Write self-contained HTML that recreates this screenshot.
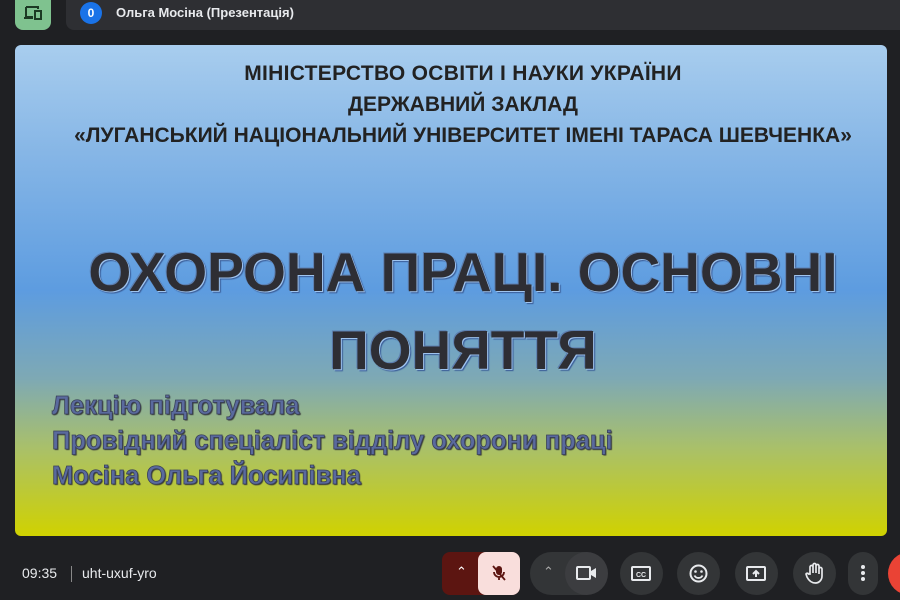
<!DOCTYPE html>
<html><head><meta charset="utf-8"><style>
*{margin:0;padding:0;box-sizing:border-box}
body{width:900px;height:600px;background:#1f2023;font-family:"Liberation Sans",sans-serif;position:relative;overflow:hidden}
.abs{position:absolute}
.slide{left:15px;top:45px;width:872px;height:491px;border-radius:6px;
background:linear-gradient(180deg,#a8cdee 0%,#86b6e6 22%,#5d9ce0 50%,#7ea9b4 68%,#a9c06a 82%,#d0d200 100%)}
.hdr{left:27px;width:872px;text-align:center;font-weight:bold;font-size:21px;color:#222;white-space:nowrap}
.big{left:27px;width:872px;text-align:center;font-weight:bold;font-size:55px;color:#2e2e34;white-space:nowrap;
text-shadow:1px 1px 0 #9ec3ee,-1px -1px 0 #5d7fb0,2px 2px 1px #3a5d98}
.sub{left:52px;font-weight:bold;font-size:25.5px;color:#5a6a9e;-webkit-text-stroke:0.8px #39405a;text-shadow:1px 1px 1px #333;white-space:nowrap}
.btn{background:#333537;border-radius:22px;height:43px;top:552px}
</style></head><body>
<div class="abs" style="left:15px;top:0;width:36px;height:30px;background:#7fc28f;border-radius:0 0 8px 8px"></div>
<svg class="abs" style="left:23px;top:5px" width="20" height="16" viewBox="0 0 20 16"><path d="M3 2h12v2M3 2v10h7M1 13h9" stroke="#1c3a23" stroke-width="2" fill="none"/><rect x="12" y="6" width="6" height="8" stroke="#1c3a23" stroke-width="2" fill="none"/></svg>
<div class="abs" style="left:66px;top:0;width:834px;height:30px;background:#2e2f33;border-radius:0 0 0 8px"></div>
<div class="abs" style="left:80px;top:2px;width:22px;height:22px;border-radius:50%;background:#1a73e8;color:#fff;font-size:12px;font-weight:bold;text-align:center;line-height:22px">0</div>
<div class="abs" style="left:116px;top:5px;color:#e8eaed;font-size:13px;font-weight:bold">Ольга Мосіна (Презентація)</div>

<div class="abs slide"></div>
<div class="abs hdr" style="top:62px;letter-spacing:0.3px">МІНІСТЕРСТВО ОСВІТИ І НАУКИ УКРАЇНИ</div>
<div class="abs hdr" style="top:93px">ДЕРЖАВНИЙ ЗАКЛАД</div>
<div class="abs hdr" style="top:124px">«ЛУГАНСЬКИЙ НАЦІОНАЛЬНИЙ УНІВЕРСИТЕТ ІМЕНІ ТАРАСА ШЕВЧЕНКА»</div>
<div class="abs big" style="top:240px">ОХОРОНА ПРАЦІ. ОСНОВНІ</div>
<div class="abs big" style="top:318px">ПОНЯТТЯ</div>
<div class="abs sub" style="top:392px">Лекцію підготувала</div>
<div class="abs sub" style="top:427px">Провідний спеціаліст відділу охорони праці</div>
<div class="abs sub" style="top:462px">Мосіна Ольга Йосипівна</div>

<div class="abs" style="left:22px;top:565px;color:#e8eaed;font-size:14px">09:35</div>
<div class="abs" style="left:71px;top:566px;width:1px;height:16px;background:#888"></div>
<div class="abs" style="left:82px;top:565px;color:#e8eaed;font-size:14px">uht-uxuf-yro</div>

<div class="abs" style="left:442px;top:552px;width:78px;height:43px;background:#5c1511;border-radius:8px"></div>
<div class="abs" style="left:478px;top:552px;width:42px;height:43px;background:#f9dedc;border-radius:8px"></div>
<div class="abs" style="left:456px;top:564px;color:#fff;font-size:13px">&#8963;</div>
<svg class="abs" style="left:489px;top:563px" width="20" height="20" viewBox="0 0 20 20"><rect x="7" y="3" width="6" height="9" rx="3" fill="#5c1511"/><path d="M5 9a5 5 0 0 0 10 0M10 14v3M4 3l12 14" stroke="#5c1511" stroke-width="1.8" fill="none"/></svg>

<div class="abs btn" style="left:530px;width:76px"></div>
<div class="abs" style="left:543px;top:564px;color:#aaa;font-size:13px">&#8963;</div>
<div class="abs" style="left:565px;top:552px;width:43px;height:43px;border-radius:50%;background:#3c3d40"></div>
<svg class="abs" style="left:576px;top:565px" width="22" height="16" viewBox="0 0 22 16"><rect x="1" y="2" width="13" height="12" rx="1" stroke="#e8eaed" stroke-width="2" fill="none"/><path d="M15 6l5-3v10l-5-3z" fill="#e8eaed"/></svg>
<div class="abs btn" style="left:620px;width:43px"></div>
<svg class="abs" style="left:630px;top:565px" width="22" height="17" viewBox="0 0 22 17"><rect x="2" y="2" width="18" height="13" rx="1" stroke="#e8eaed" stroke-width="2" fill="none"/><text x="11" y="12" font-size="7" font-family="Liberation Sans" font-weight="bold" fill="#e8eaed" text-anchor="middle">CC</text></svg>
<div class="abs btn" style="left:677px;width:43px"></div>
<svg class="abs" style="left:688px;top:563px" width="21" height="21" viewBox="0 0 21 21"><circle cx="10.5" cy="10.5" r="8" stroke="#e8eaed" stroke-width="2" fill="none"/><circle cx="7.5" cy="8.5" r="1.3" fill="#e8eaed"/><circle cx="13.5" cy="8.5" r="1.3" fill="#e8eaed"/><path d="M6.5 12.5a4.5 4.5 0 0 0 8 0" stroke="#e8eaed" stroke-width="1.8" fill="none"/></svg>
<div class="abs btn" style="left:735px;width:43px"></div>
<svg class="abs" style="left:745px;top:565px" width="22" height="17" viewBox="0 0 22 17"><rect x="2" y="2" width="18" height="13" rx="1" stroke="#e8eaed" stroke-width="2" fill="none"/><path d="M11 12V7M8 9l3-3 3 3" stroke="#e8eaed" stroke-width="2" fill="none"/></svg>
<div class="abs btn" style="left:793px;width:43px"></div>
<svg class="abs" style="left:804px;top:562px" width="22" height="23" viewBox="0 0 22 23"><path d="M6 12V5a1.5 1.5 0 0 1 3 0v6V3a1.5 1.5 0 0 1 3 0v8V4a1.5 1.5 0 0 1 3 0v8V7a1.5 1.5 0 0 1 3 0v7c0 4-3 7-6.5 7S5 19 3 15l-1-3c.5-1 2-1 2.5 0z" stroke="#e8eaed" stroke-width="1.7" fill="none"/></svg>
<div class="abs btn" style="left:848px;width:30px"></div>
<div class="abs" style="left:861px;top:565px;width:4px;height:4px;border-radius:50%;background:#e8eaed;box-shadow:0 6px 0 #e8eaed,0 12px 0 #e8eaed"></div>
<div class="abs" style="left:888px;top:552px;width:56px;height:43px;border-radius:22px;background:#ea4335"></div>
</body></html>
